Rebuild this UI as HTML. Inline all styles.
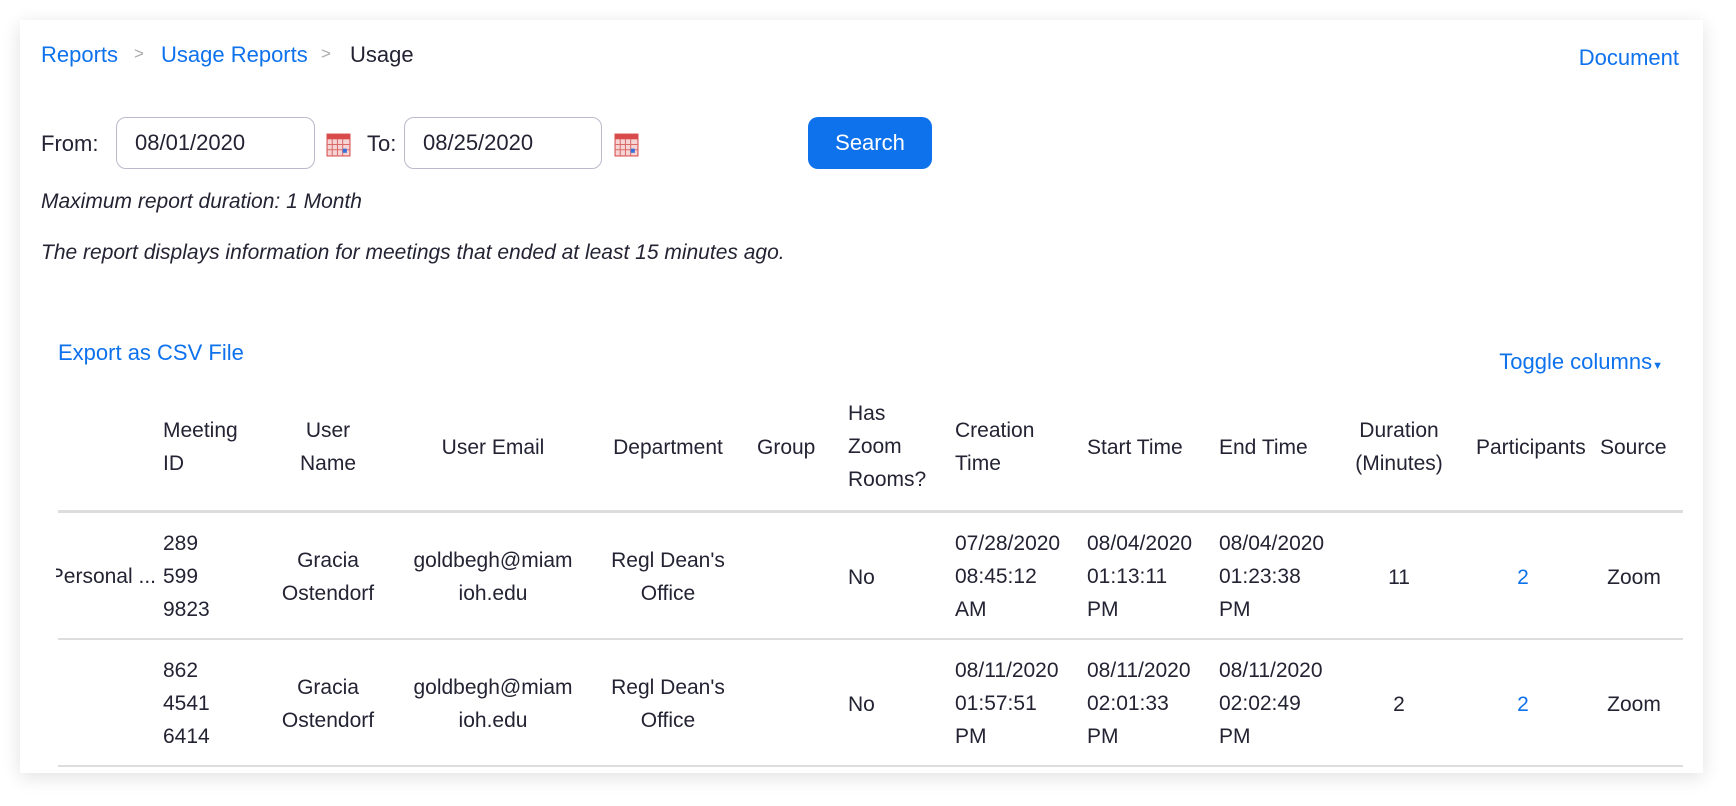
<!DOCTYPE html>
<html><head><style>
body{margin:0;width:1736px;height:806px;background:#fff;font-family:"Liberation Sans",sans-serif;color:#232333;position:relative;overflow:hidden}
.card{position:absolute;left:20px;top:20px;width:1683px;height:753px;background:#fff;box-shadow:0 4px 18px rgba(0,0,0,0.12)}
.a{position:absolute;white-space:nowrap}
.l{color:#0e72ed}
.inp{position:absolute;top:117px;height:52px;border:1px solid #babacc;border-radius:10px;font-size:22px;line-height:50px;padding-left:18px;box-sizing:border-box}
.cal{position:absolute;top:132px;width:25px;height:25px}
.t{position:absolute;font-size:21px;line-height:33px;white-space:nowrap}
.c{text-align:center;transform:translateX(-50%)}
.hl{position:absolute;left:58px;width:1625px;background:#ddd}
</style></head><body>
<div class="card"></div>
<div class="a l" style="left:41px;top:42px;font-size:22px">Reports</div>
<div class="a" style="left:134px;top:44px;font-size:17px;color:#aaa">&gt;</div>
<div class="a l" style="left:161px;top:42px;font-size:22px">Usage Reports</div>
<div class="a" style="left:321px;top:44px;font-size:17px;color:#aaa">&gt;</div>
<div class="a" style="left:350px;top:42px;font-size:22px">Usage</div>
<div class="a l" style="right:57px;top:45px;font-size:22px">Document</div>
<div class="a" style="left:41px;top:131px;font-size:22px">From:</div>
<div class="inp" style="left:116px;width:199px">08/01/2020</div>
<svg class="cal" style="left:326px" viewBox="0 0 24 24"><rect x="1" y="2" width="22" height="21" fill="#f6d4d4" stroke="#d94a4a"/><rect x="1" y="2" width="22" height="5" fill="#d94a4a"/><path d="M1 12h22M1 17h22M6 7v16M11 7v16M16 7v16" stroke="#d96a6a" stroke-width="1"/><rect x="16" y="16" width="4" height="4" fill="#3a6fd8"/></svg>
<div class="a" style="left:367px;top:131px;font-size:22px">To:</div>
<div class="inp" style="left:404px;width:198px">08/25/2020</div>
<svg class="cal" style="left:614px" viewBox="0 0 24 24"><rect x="1" y="2" width="22" height="21" fill="#f6d4d4" stroke="#d94a4a"/><rect x="1" y="2" width="22" height="5" fill="#d94a4a"/><path d="M1 12h22M1 17h22M6 7v16M11 7v16M16 7v16" stroke="#d96a6a" stroke-width="1"/><rect x="16" y="16" width="4" height="4" fill="#3a6fd8"/></svg>
<div class="a" style="left:808px;top:117px;width:124px;height:52px;background:#0e72ed;border-radius:10px;color:#fff;font-size:22px;line-height:52px;text-align:center">Search</div>
<div class="a" style="left:41px;top:190px;font-size:21px;font-style:italic">Maximum report duration: 1 Month</div>
<div class="a" style="left:41px;top:241px;font-size:21px;font-style:italic">The report displays information for meetings that ended at least 15 minutes ago.</div>
<div class="a l" style="left:58px;top:340px;font-size:22px">Export as CSV File</div>
<div class="a l" style="right:73px;top:349px;font-size:22px">Toggle columns<span style="font-size:11px">&#9660;</span></div>

<div class="t" style="left:163px;top:414px">Meeting<br>ID</div>
<div class="t c" style="left:328px;top:414px">User<br>Name</div>
<div class="t c" style="left:493px;top:431px">User Email</div>
<div class="t c" style="left:668px;top:431px">Department</div>
<div class="t" style="left:757px;top:431px">Group</div>
<div class="t" style="left:848px;top:397px">Has<br>Zoom<br>Rooms?</div>
<div class="t" style="left:955px;top:414px">Creation<br>Time</div>
<div class="t" style="left:1087px;top:431px">Start Time</div>
<div class="t" style="left:1219px;top:431px">End Time</div>
<div class="t c" style="left:1399px;top:414px">Duration<br>(Minutes)</div>
<div class="t" style="left:1476px;top:431px">Participants</div>
<div class="t" style="left:1600px;top:431px">Source</div>
<div class="hl" style="top:510px;height:3px"></div>

<div class="t" style="left:56px;top:560px;width:100px;overflow:hidden"><span style="position:absolute;right:0">Personal ...</span>&nbsp;</div>
<div class="t" style="left:163px;top:527px">289<br>599<br>9823</div>
<div class="t c" style="left:328px;top:544px">Gracia<br>Ostendorf</div>
<div class="t c" style="left:493px;top:544px">goldbegh@miam<br>ioh.edu</div>
<div class="t c" style="left:668px;top:544px">Regl Dean's<br>Office</div>
<div class="t" style="left:848px;top:561px">No</div>
<div class="t" style="left:955px;top:527px">07/28/2020<br>08:45:12<br>AM</div>
<div class="t" style="left:1087px;top:527px">08/04/2020<br>01:13:11<br>PM</div>
<div class="t" style="left:1219px;top:527px">08/04/2020<br>01:23:38<br>PM</div>
<div class="t c" style="left:1399px;top:561px">11</div>
<div class="t c l" style="left:1523px;top:561px">2</div>
<div class="t c" style="left:1634px;top:561px">Zoom</div>
<div class="hl" style="top:638px;height:2px"></div>

<div class="t" style="left:163px;top:654px">862<br>4541<br>6414</div>
<div class="t c" style="left:328px;top:671px">Gracia<br>Ostendorf</div>
<div class="t c" style="left:493px;top:671px">goldbegh@miam<br>ioh.edu</div>
<div class="t c" style="left:668px;top:671px">Regl Dean's<br>Office</div>
<div class="t" style="left:848px;top:688px">No</div>
<div class="t" style="left:955px;top:654px">08/11/2020<br>01:57:51<br>PM</div>
<div class="t" style="left:1087px;top:654px">08/11/2020<br>02:01:33<br>PM</div>
<div class="t" style="left:1219px;top:654px">08/11/2020<br>02:02:49<br>PM</div>
<div class="t c" style="left:1399px;top:688px">2</div>
<div class="t c l" style="left:1523px;top:688px">2</div>
<div class="t c" style="left:1634px;top:688px">Zoom</div>
<div class="hl" style="top:765px;height:2px"></div>
</body></html>
